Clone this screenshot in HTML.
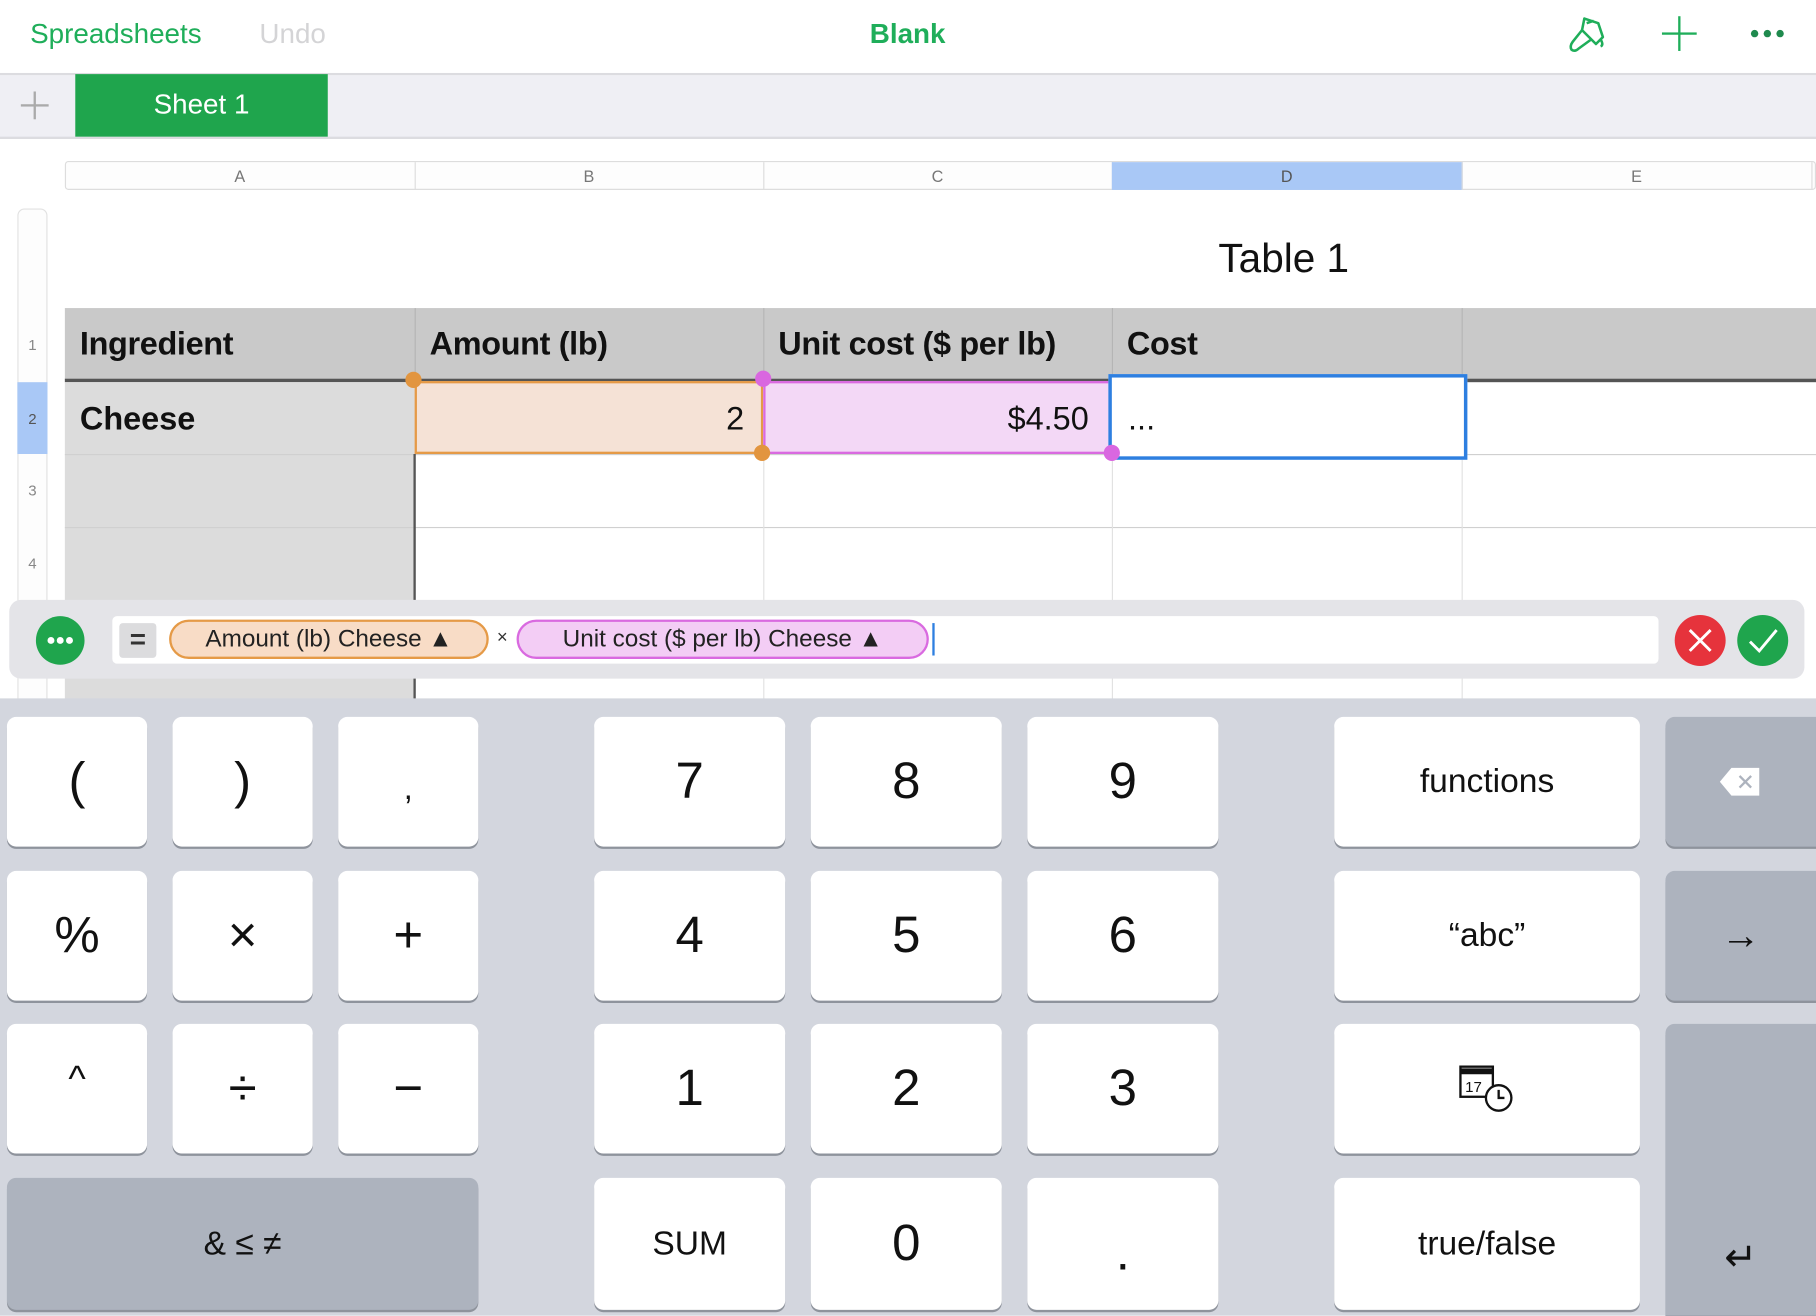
<!DOCTYPE html>
<html><head><meta charset="utf-8"><style>
html,body{margin:0;padding:0;width:1816px;height:1316px;overflow:hidden;background:#fff;font-family:"Liberation Sans",sans-serif;}
#w{position:absolute;left:0;top:0;width:1568px;height:1136px;transform:scale(1.15816);transform-origin:0 0;}
.a{position:absolute;}
.t{position:absolute;white-space:nowrap;}
.k{position:absolute;background:#fff;border-radius:8px;box-shadow:0 2px 0 #8e939c;display:flex;align-items:center;justify-content:center;font-size:44px;color:#111;}
.d{background:#adb3be;}
.cl{position:absolute;top:140px;height:24px;font-size:14px;color:#777;display:flex;align-items:center;justify-content:center;border-right:1px solid #ddd;}
.rn{position:absolute;left:15px;width:26px;font-size:13px;color:#888;display:flex;align-items:center;justify-content:center;}
.hd{position:absolute;top:266px;height:62px;font-size:28px;font-weight:bold;display:flex;align-items:center;padding-left:13px;box-sizing:border-box;color:#111;letter-spacing:-0.3px}
</style></head><body><div id="w">
<div class="a" style="left:0;top:0;width:1568px;height:63px;background:#fff;border-bottom:2px solid #dcdce0"></div>
<div class="t" style="left:26px;top:16px;font-size:24px;color:#1fae5a">Spreadsheets</div>
<div class="t" style="left:224px;top:16px;font-size:24px;color:#d4d4d6">Undo</div>
<div class="t" style="left:751px;top:16px;font-size:24px;color:#1fae5a;font-weight:bold">Blank</div>
<svg class="a" style="left:1352px;top:12px" width="40" height="36" viewBox="0 0 40 36" fill="none" stroke="#1fae5a" stroke-width="2.2" stroke-linejoin="round"><path d="M16 4 L28 8 L32 20 L26 26 L14 14 Z"/><path d="M14 14 L6 24 Q3 28 5 31 Q8 33 11 30 L22 22"/><path d="M18 8 L24 6"/><path d="M30 22 Q33 27 30 28"/></svg>
<div class="a" style="left:1435px;top:28px;width:30px;height:2px;background:#1fae5a"></div>
<div class="a" style="left:1449px;top:14px;width:2px;height:30px;background:#1fae5a"></div>
<svg class="a" style="left:1508px;top:22px" width="36" height="14"><circle cx="7" cy="7" r="3.2" fill="#1f8a4e"/><circle cx="18" cy="7" r="3.2" fill="#1f8a4e"/><circle cx="29" cy="7" r="3.2" fill="#1f8a4e"/></svg>
<div class="a" style="left:0;top:65px;width:1568px;height:53px;background:#efeff4;border-bottom:2px solid #dcdce0"></div>
<div class="a" style="left:18px;top:90px;width:24px;height:2px;background:#aaa"></div>
<div class="a" style="left:29px;top:79px;width:2px;height:24px;background:#aaa"></div>
<div class="a" style="left:65px;top:64px;width:218px;height:54px;background:#1fa54d;color:#fff;font-size:24px;display:flex;align-items:center;justify-content:center">Sheet 1</div>
<div class="a" style="left:56px;top:139px;width:1512px;height:25px;border:1px solid #ddd;border-radius:3px;background:#fdfdfd;box-sizing:border-box"></div>
<div class="cl" style="left:56px;width:302px">A</div>
<div class="cl" style="left:358px;width:301px">B</div>
<div class="cl" style="left:659px;width:301px">C</div>
<div class="cl" style="left:960px;width:302px;background:#a9c8f6;color:#555">D</div>
<div class="cl" style="left:1262px;width:302px">E</div>
<div class="a" style="left:15px;top:180px;width:26px;height:430px;border:1px solid #e2e2e2;border-radius:6px;box-sizing:border-box;background:#fdfdfd"></div>
<div class="rn" style="top:266px;height:62px">1</div>
<div class="rn" style="top:330px;height:62px;background:#a9c8f6;color:#555">2</div>
<div class="rn" style="top:392px;height:63px">3</div>
<div class="rn" style="top:455px;height:63px">4</div>
<div class="t" style="left:1052px;top:204px;font-size:35px;color:#111">Table 1</div>
<div class="a" style="left:56px;top:266px;width:1512px;height:62px;background:#c9c9c9"></div>
<div class="a" style="left:358px;top:266px;width:1px;height:62px;background:#b5b5b5"></div>
<div class="a" style="left:659px;top:266px;width:1px;height:62px;background:#b5b5b5"></div>
<div class="a" style="left:960px;top:266px;width:1px;height:62px;background:#b5b5b5"></div>
<div class="a" style="left:1262px;top:266px;width:1px;height:62px;background:#b5b5b5"></div>
<div class="hd" style="left:56px;width:302px">Ingredient</div>
<div class="hd" style="left:358px;width:301px">Amount (lb)</div>
<div class="hd" style="left:659px;width:301px">Unit cost ($ per lb)</div>
<div class="hd" style="left:960px;width:302px">Cost</div>
<div class="a" style="left:56px;top:327px;width:1512px;height:3px;background:#555"></div>
<div class="a" style="left:56px;top:330px;width:302px;height:290px;background:#dcdcdc"></div>
<div class="a" style="left:56px;top:392px;width:1512px;height:1px;background:#d0d0d0"></div>
<div class="a" style="left:56px;top:455px;width:1512px;height:1px;background:#d0d0d0"></div>
<div class="a" style="left:357px;top:392px;width:2px;height:220px;background:#555"></div>
<div class="a" style="left:659px;top:392px;width:1px;height:220px;background:#e2e2e2"></div>
<div class="a" style="left:960px;top:392px;width:1px;height:220px;background:#e2e2e2"></div>
<div class="a" style="left:1262px;top:330px;width:1px;height:290px;background:#e2e2e2"></div>
<div class="t" style="left:69px;top:346px;font-size:28px;font-weight:bold;color:#111">Cheese</div>
<div class="a" style="left:358px;top:329px;width:301px;height:63px;background:#f5e2d6;border:2px solid #e59a47;box-sizing:border-box"></div>
<div class="t" style="left:627px;top:346px;font-size:28px;color:#111">2</div>
<div class="a" style="left:659px;top:329px;width:301px;height:63px;background:#f3d8f6;border:2px solid #d96ae0;box-sizing:border-box"></div>
<div class="t" style="left:870px;top:346px;font-size:28px;color:#111">$4.50</div>
<div class="a" style="left:957px;top:323px;width:310px;height:74px;border:3px solid #2e7fe0;box-sizing:border-box;background:#fff"></div>
<div class="t" style="left:974px;top:346px;font-size:28px;color:#111">...</div>
<div class="a" style="left:350px;top:321px;width:14px;height:14px;border-radius:7px;background:#e2953f"></div>
<div class="a" style="left:651px;top:384px;width:14px;height:14px;border-radius:7px;background:#e2953f"></div>
<div class="a" style="left:652px;top:320px;width:14px;height:14px;border-radius:7px;background:#d967e0"></div>
<div class="a" style="left:953px;top:384px;width:14px;height:14px;border-radius:7px;background:#d967e0"></div>
<div class="a" style="left:8px;top:518px;width:1550px;height:68px;background:#e4e4e8;border-radius:10px"></div>
<div class="a" style="left:31px;top:532px;width:42px;height:42px;border-radius:21px;background:#1fa54d"></div>
<svg class="a" style="left:31px;top:532px" width="42" height="42"><circle cx="13" cy="21" r="3" fill="#fff"/><circle cx="21" cy="21" r="3" fill="#fff"/><circle cx="29" cy="21" r="3" fill="#fff"/></svg>
<div class="a" style="left:97px;top:532px;width:1335px;height:41px;background:#fff;border-radius:4px"></div>
<div class="a" style="left:103px;top:538px;width:32px;height:30px;background:#dcdcde;border-radius:3px;font-size:24px;font-weight:bold;display:flex;align-items:center;justify-content:center;color:#333">=</div>
<div class="a" style="left:146px;top:535px;width:276px;height:34px;border:2px solid #e59a47;background:#f8dcc6;border-radius:17px;box-sizing:border-box;font-size:21px;color:#222;display:flex;align-items:center;justify-content:center">Amount (lb) Cheese&nbsp;▲</div>
<div class="t" style="left:429px;top:542px;font-size:16px;color:#333">×</div>
<div class="a" style="left:446px;top:535px;width:356px;height:34px;border:2px solid #d96ae0;background:#f3cdf5;border-radius:17px;box-sizing:border-box;font-size:21px;color:#222;display:flex;align-items:center;justify-content:center">Unit cost ($ per lb) Cheese&nbsp;▲</div>
<div class="a" style="left:805px;top:538px;width:2px;height:28px;background:#2e7fe0"></div>
<div class="a" style="left:1446px;top:531px;width:44px;height:44px;border-radius:22px;background:#e6333c"></div>
<svg class="a" style="left:1446px;top:531px" width="44" height="44"><path d="M13 13 L31 31 M31 13 L13 31" stroke="#fff" stroke-width="2.5"/></svg>
<div class="a" style="left:1500px;top:531px;width:44px;height:44px;border-radius:22px;background:#1fa54d"></div>
<svg class="a" style="left:1500px;top:531px" width="44" height="44"><path d="M11 23 L19 31 L34 13" stroke="#fff" stroke-width="2.5" fill="none"/></svg>
<div class="a" style="left:0;top:603px;width:1568px;height:533px;background:#d3d6de"></div>
<div class="k" style="left:6px;top:619px;width:121px;height:112px">(</div>
<div class="k" style="left:149px;top:619px;width:121px;height:112px">)</div>
<div class="k" style="left:292px;top:619px;width:121px;height:112px;font-size:28px;padding-top:12px;box-sizing:border-box">,</div>
<div class="k" style="left:513px;top:619px;width:165px;height:112px">7</div>
<div class="k" style="left:700px;top:619px;width:165px;height:112px">8</div>
<div class="k" style="left:887px;top:619px;width:165px;height:112px">9</div>
<div class="k" style="left:1152px;top:619px;width:264px;height:112px;font-size:29px">functions</div>
<div class="k d" style="left:1438px;top:619px;width:130px;height:112px;border-radius:8px 0 0 8px"><svg width="40" height="28"><path d="M12 2 H36 V26 H12 L2 14 Z" fill="#fff"/><path d="M19 9 L29 19 M29 9 L19 19" stroke="#adb3be" stroke-width="2"/></svg></div>
<div class="k" style="left:6px;top:752px;width:121px;height:112px">%</div>
<div class="k" style="left:149px;top:752px;width:121px;height:112px">×</div>
<div class="k" style="left:292px;top:752px;width:121px;height:112px">+</div>
<div class="k" style="left:513px;top:752px;width:165px;height:112px">4</div>
<div class="k" style="left:700px;top:752px;width:165px;height:112px">5</div>
<div class="k" style="left:887px;top:752px;width:165px;height:112px">6</div>
<div class="k" style="left:1152px;top:752px;width:264px;height:112px;font-size:29px">“abc”</div>
<div class="k d" style="left:1438px;top:752px;width:130px;height:112px;border-radius:8px 0 0 8px;font-size:34px">→</div>
<div class="k" style="left:6px;top:884px;width:121px;height:112px;font-size:32px;padding-bottom:18px;box-sizing:border-box">^</div>
<div class="k" style="left:149px;top:884px;width:121px;height:112px">÷</div>
<div class="k" style="left:292px;top:884px;width:121px;height:112px">−</div>
<div class="k" style="left:513px;top:884px;width:165px;height:112px">1</div>
<div class="k" style="left:700px;top:884px;width:165px;height:112px">2</div>
<div class="k" style="left:887px;top:884px;width:165px;height:112px">3</div>
<div class="k" style="left:1152px;top:884px;width:264px;height:112px"><svg width="56" height="48" viewBox="0 0 56 48" fill="none" stroke="#111" stroke-width="2"><rect x="5" y="5" width="28" height="26"/><path d="M5 9 H33" stroke-width="5"/><text x="9" y="27" font-size="13" fill="#111" stroke="none" font-family="Liberation Sans">17</text><circle cx="38" cy="32" r="11" fill="#fff"/><path d="M38 25 V32 H43"/></svg></div>
<div class="k d" style="left:1438px;top:884px;width:130px;height:252px;border-radius:8px 0 0 0;font-size:34px;align-items:flex-end;padding-bottom:30px;box-sizing:border-box">↵</div>
<div class="k d" style="left:6px;top:1017px;width:407px;height:114px;font-size:29px">&amp; ≤ ≠</div>
<div class="k" style="left:513px;top:1017px;width:165px;height:114px;font-size:29px">SUM</div>
<div class="k" style="left:700px;top:1017px;width:165px;height:114px">0</div>
<div class="k" style="left:887px;top:1017px;width:165px;height:114px;padding-top:16px;box-sizing:border-box">.</div>
<div class="k" style="left:1152px;top:1017px;width:264px;height:114px;font-size:29px">true/false</div>
</div></body></html>
